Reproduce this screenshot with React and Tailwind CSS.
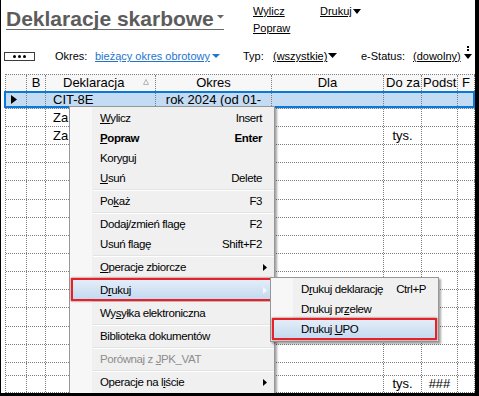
import React from "react";

const dot = "border-dotted border-[#7f7f7f]";
const cols = "grid grid-cols-[21px_19px_110px_116px_112px_38px_36px_17px]";

function Cell({ children, className = "" }) {
  return (
    <div className={`border-r ${dot} overflow-hidden whitespace-nowrap flex items-center ${className}`}>
      {children}
    </div>
  );
}

const align = [
  "justify-start pl-[5px]",
  "justify-center",
  "justify-start pl-[7px]",
  "justify-center",
  "justify-start pl-[3px]",
  "justify-center",
  "justify-center",
  "justify-center",
];

const rows = [
  { h: "h-[18px]", sel: true, c: ["tri", "", "CIT-8E", "rok 2024 (od 01-", "", "", "", ""] },
  { h: "h-[18px]", c: ["", "", "Za", "", "", "", "", ""] },
  { h: "h-[18px]", c: ["", "", "Za", "", "", "tys.", "", ""] },
  { h: "h-[18px]", c: [] },
  { h: "h-[18px]", c: [] },
  { h: "h-[19px]", c: [] },
  { h: "h-[18px]", c: [] },
  { h: "h-[18px]", c: [] },
  { h: "h-[18px]", c: [] },
  { h: "h-[18px]", c: [] },
  { h: "h-[18px]", c: [] },
  { h: "h-[18px]", c: [] },
  { h: "h-[19px]", c: [] },
  { h: "h-[18px]", c: [] },
  { h: "h-[18px]", c: [] },
  { h: "h-[13px]", c: [] },
  { h: "h-[17px]", c: ["", "", "", "", "", "tys.", "###", ""] },
];

function Arrow({ color = "#000" }) {
  return (
    <svg width="4" height="7" viewBox="0 0 4 7" className="relative">
      <polygon points="0,0 4,3.5 0,7" fill={color} />
    </svg>
  );
}

function U({ children }) {
  return <span className="underline underline-offset-[1px]">{children}</span>;
}

function Item({ pre = "", u = "", post = "", k, bold, arrow, disabled }) {
  return (
    <div
      className={`h-[20px] flex items-center pl-[30px] pr-[12px] whitespace-nowrap ${
        disabled ? "text-[#8d8d8d]" : "text-black"
      } ${bold ? "font-bold" : ""}`}
    >
      <span>
        {pre}
        {u && <U>{u}</U>}
        {post}
      </span>
      {k && <span className="ml-auto">{k}</span>}
      {arrow && (
        <span className="ml-auto mr-[-5px] flex items-center">
          <Arrow />
        </span>
      )}
    </div>
  );
}

function Sep() {
  return (
    <div className="h-[3px] pt-[1px] pl-[23px]">
      <div className="h-px bg-[#e2e3e3]" />
      <div className="h-px bg-white" />
    </div>
  );
}

function Red({ className }) {
  return (
    <div
      className={`absolute border-2 border-[#e4222a] bg-gradient-to-b from-[#e3edf8] to-[#c4daf1] shadow-[0_0_2px_rgba(120,0,0,0.7)] ${className}`}
    />
  );
}

export default function App() {
  return (
    <div className="relative w-[479px] h-[396px] overflow-hidden bg-white border-l border-r-4 border-b-[3px] border-black font-['Liberation_Sans',Arial,sans-serif] text-black">
      {/* top */}
      <div className="flex h-[46px]">
        <div className="w-[252px] pl-[5px] pt-[9px]">
          <span className="inline-flex items-start border-b border-[#6a6a6a] text-[21px] leading-[20px] font-bold text-[#5c5c5c]">
            Deklaracje skarbowe
            <svg width="7" height="4" viewBox="0 0 7 4" className="ml-[3px] mt-[6px]">
              <polygon points="0,0 7,0 3.5,3.5" fill="#666" />
            </svg>
          </span>
        </div>
        <div className="pt-[3px] text-[11px] leading-[17px]">
          <div className="flex">
            <span className="w-[67px]">
              <U>Wylicz</U>
            </span>
            <span className="flex items-start">
              <U>Drukuj</U>
              <svg width="8" height="5" viewBox="0 0 8 5" className="ml-[1px] mt-[6px]">
                <polygon points="0,0 8,0 4,5" fill="#000" />
              </svg>
            </span>
          </div>
          <div>
            <U>Popraw</U>
          </div>
        </div>
      </div>

      {/* filter row */}
      <div className="flex h-[20px] items-center text-[11px] leading-[20px]">
        <div className="w-[54px] flex items-center">
          <div className="ml-[3px] w-[31px] h-[9px] border border-[#3c3c3c] bg-white flex items-center justify-center gap-[2px]">
            <span className="w-[3px] h-[3px] rounded-full bg-black" />
            <span className="w-[3px] h-[3px] rounded-full bg-black" />
            <span className="w-[3px] h-[3px] rounded-full bg-black" />
          </div>
        </div>
        <div className="w-[40px]">Okres:</div>
        <div className="w-[148px] flex items-center text-[#1f74cc]">
          <span className="underline underline-offset-[1px]">bieżący okres obrotowy</span>
          <svg width="8" height="4" viewBox="0 0 8 4" className="ml-[2px] -mt-[1px]">
            <polygon points="0,0 8,0 4,4" fill="#1f74cc" />
          </svg>
        </div>
        <div className="w-[30px]">Typ:</div>
        <div className="w-[88px] flex items-center">
          <span className="underline underline-offset-[1px]">(wszystkie)</span>
          <svg width="9" height="5" viewBox="0 0 9 5" className="ml-[1px] -mt-[1px]">
            <polygon points="0,0 9,0 4.5,5" fill="#000" />
          </svg>
        </div>
        <div className="w-[52px]">e-Status:</div>
        <div className="flex items-center">
          <span className="underline underline-offset-[1px]">(dowolny)</span>
          <span className="relative ml-[3px] w-[8px] h-[14px] -mt-[6px]">
            <span className="absolute left-[3px] top-0 w-[2px] h-[2px] bg-black" />
            <span className="absolute left-[3px] top-[3px] w-[2px] h-[2px] bg-black" />
            <svg width="8" height="5" viewBox="0 0 8 5" className="absolute left-0 top-[8px]">
              <polygon points="0,0 8,0 4,5" fill="#000" />
            </svg>
          </span>
        </div>
      </div>

      {/* grid */}
      <div className={`mt-[8px] ml-[4px] w-[470px] border-l ${dot} text-[13px] leading-[16px]`}>
        <div className={`${cols} h-[17px] border-t ${dot} bg-[#f7f7f7]`}>
          <Cell />
          <Cell className="justify-center">B</Cell>
          <Cell className="justify-start pl-[17px]">
            Deklaracja
            <svg width="6" height="6" viewBox="0 0 6 6" className="ml-auto mr-[6px] -mt-[2px]">
              <polygon points="3,0.5 5.5,5.5 0.5,5.5" fill="none" stroke="#b5b5b5" strokeWidth="1" />
            </svg>
          </Cell>
          <Cell className="justify-center">Okres</Cell>
          <Cell className="justify-center">Dla</Cell>
          <Cell className="justify-start pl-[2px]">Do za</Cell>
          <Cell className="justify-start pl-[1px]">Podst</Cell>
          <Cell className="justify-center">F</Cell>
        </div>
        {rows.map((r, i) => (
          <div
            key={i}
            className={`${cols} ${r.h} border-b ${dot} relative ${r.sel ? "bg-[#c3dcf3]" : "bg-white"}`}
          >
            {[0, 1, 2, 3, 4, 5, 6, 7].map((j) => (
              <Cell key={j} className={align[j]}>
                {r.c[j] === "tri" ? (
                  <svg width="6" height="9" viewBox="0 0 6 9">
                    <polygon points="0,0 6,4.5 0,9" fill="#000" />
                  </svg>
                ) : (
                  r.c[j] || ""
                )}
              </Cell>
            ))}
            {r.sel && <div className="absolute -left-[2px] right-0 top-0 bottom-0 border-2 border-[#0a78d7]" />}
          </div>
        ))}
      </div>

      {/* context menu */}
      <div className="absolute left-[68px] top-[106px] w-[206px] h-[288px] border border-[#979797] shadow-[2px_2px_2px_rgba(0,0,0,0.35)] bg-[linear-gradient(to_right,#f7f7f7_0,#f7f7f7_22px,#f0f0f0_22px)] pt-[1px] text-[11.5px] tracking-[-0.4px] leading-[14px]">
        <Item u="W" post="ylicz" k="Insert" />
        <Item u="P" post="opraw" k="Enter" bold />
        <Item pre="Korygu" u="j" />
        <Item u="U" post="suń" k="Delete" />
        <Sep />
        <Item pre="Po" u="k" post="aż" k="F3" />
        <Sep />
        <Item pre="Dodaj/zmień fla" u="g" post="ę" k="F2" />
        <Item pre="Usuń fla" u="g" post="ę" k="Shift+F2" />
        <Sep />
        <Item u="O" post="peracje zbiorcze" arrow />
        <Sep />
        <div className="relative h-[20px] flex items-center pl-[30px] pr-[12px]">
          <Red className="left-[1px] right-[2px] -top-[2px] -bottom-[1px]" />
          <span className="relative">
            D<U>r</U>ukuj
          </span>
          <span className="relative ml-auto mr-[-5px] flex items-center">
            <Arrow color="#f4f8fc" />
          </span>
        </div>
        <Sep />
        <Item pre="Wy" u="s" post="yłka elektroniczna" />
        <Sep />
        <Item pre="Biblioteka dokumentów" />
        <Sep />
        <Item pre="Porównaj z " u="J" post="PK_VAT" disabled />
        <Sep />
        <Item pre="Operacje na l" u="i" post="ście" arrow />
      </div>

      {/* submenu */}
      <div className="absolute left-[269px] top-[277px] w-[169px] h-[65px] border border-[#979797] shadow-[2px_2px_2px_rgba(0,0,0,0.35)] bg-[linear-gradient(to_right,#f7f7f7_0,#f7f7f7_22px,#f0f0f0_22px)] pt-[1px] text-[11.5px] tracking-[-0.4px] leading-[14px]">
        <Item pre="D" u="r" post="ukuj deklarację" k="Ctrl+P" />
        <Item pre="Drukuj pr" u="z" post="elew" />
        <div className="relative h-[20px] flex items-center pl-[30px] pr-[12px]">
          <Red className="left-[1px] right-[1px] -top-[1px] bottom-[-1px]" />
          <span className="relative">
            Drukuj <U>U</U>PO
          </span>
        </div>
      </div>
    </div>
  );
}
